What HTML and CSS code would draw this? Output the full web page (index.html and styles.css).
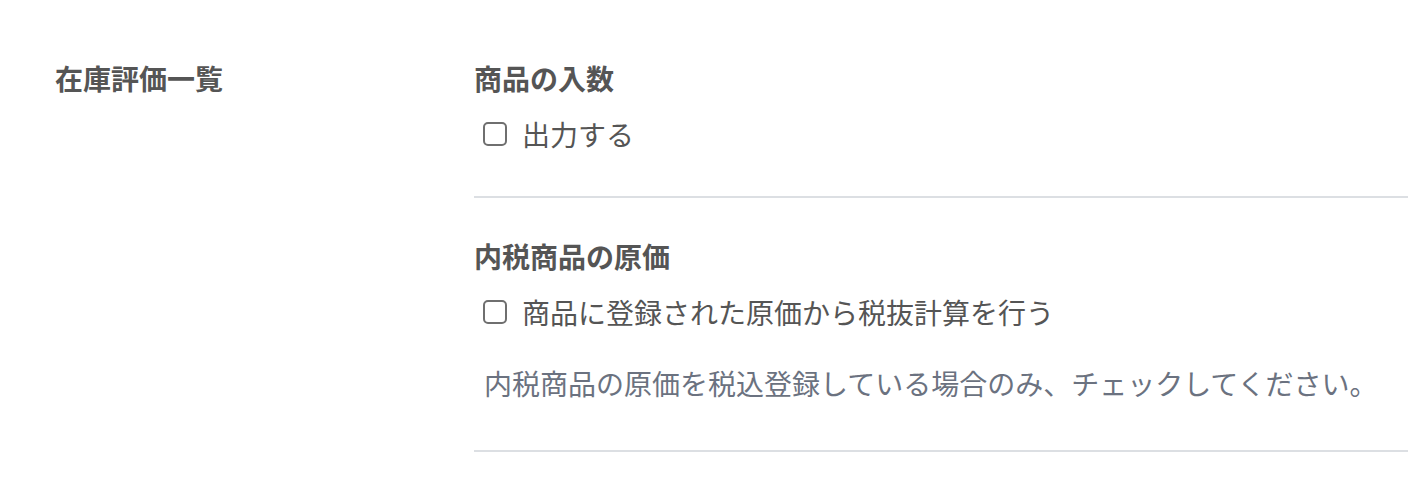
FILE: index.html
```html
<!DOCTYPE html>
<html>
    <head>
        <meta charset="utf-8">
        <meta name="viewport" content="width=device-width, initial-scale=1.0">
        <link rel="stylesheet" href="styles.css">
    </head>
    <body>
        <div class="settingRow">
            <div class="rowLabel">在庫評価一覧</div>
            <div class="rowBody">
                <div class="section">
                    <h4>商品の入数</h4>
                    <label class="check">
                        <input type="checkbox">
                        <span class="box"></span>
                        出力する
                    </label>
                </div>
                <div class="section">
                    <h4>内税商品の原価</h4>
                    <label class="check">
                        <input type="checkbox">
                        <span class="box"></span>
                        商品に登録された原価から税抜計算を行う
                    </label>
                    <p class="help">内税商品の原価を税込登録している場合のみ、チェックしてください。</p>
                </div>
            </div>
        </div>
    </body>
</html>
```

FILE: styles.css
```css
* {
    margin: 0;
    padding: 0;
    box-sizing: border-box;
}
body {
    margin: 0;
    font-family: "Noto Sans CJK JP", "Noto Sans", sans-serif;
    font-size: 28px;
    line-height: 40px;
    color: #555555;
    background: white;
}
.settingRow {
    display: flex;
    padding-top: 20px;
}
.rowLabel {
    width: 474px;
    flex-shrink: 0;
    padding: 38px 0 0 55px;
    font-weight: bold;
}
.rowBody {
    flex: 1;
}
.section {
    padding: 38px 0 42px;
    border-bottom: 2px solid #dcdfe3;
}
.section:last-child {
    padding-bottom: 47px;
}
h4 {
    font-size: 28px;
    font-weight: bold;
    margin-bottom: 16px;
}
.check {
    display: flex;
    align-items: center;
    padding-left: 9px;
    cursor: pointer;
}
.check input {
    display: none;
}
.box {
    width: 24px;
    height: 24px;
    border: 2px solid #6f6f6f;
    border-radius: 5px;
    margin-right: 15px;
    flex-shrink: 0;
}
.help {
    margin: 31px 0 0 10px;
    color: #6b7280;
}
```
